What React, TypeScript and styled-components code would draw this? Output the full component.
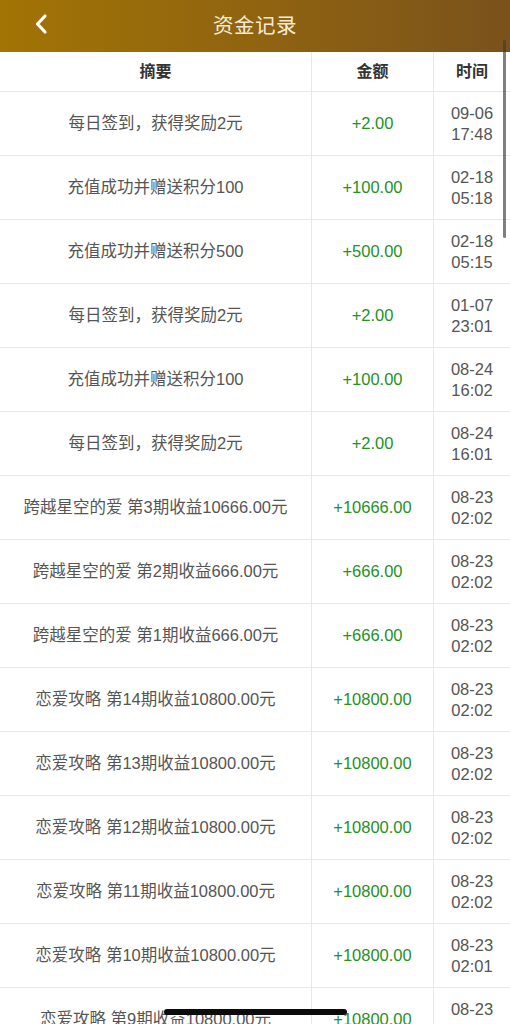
import { createGlobalStyle, styled } from 'styled-components'

const GlobalStyle = createGlobalStyle`
  html, body {
    margin: 0;
    padding: 0;
    background: #fff;
    overflow: hidden;
  }
  body {
    font-family: "Liberation Sans", "Noto Sans CJK SC", sans-serif;
  }
`

const Page = styled.div`
  width: 510px;
  height: 1024px;
  position: relative;
  overflow: hidden;
  background: #fff;
`

const NavBar = styled.div`
  height: 52px;
  box-sizing: border-box;
  padding-bottom: 5px;
  display: flex;
  align-items: center;
  justify-content: center;
  position: relative;
  background: linear-gradient(to right, #a27405, #8e6211 55%, #7a521b);
`

const BackBtn = styled.button`
  position: absolute;
  left: 27px;
  top: 9px;
  width: 28px;
  height: 30px;
  padding: 0;
  border: none;
  background: none;
  display: flex;
  align-items: center;
  justify-content: center;
`

const Title = styled.h1`
  margin: 0;
  font-size: 20.5px;
  font-weight: 400;
  color: #f6ecd6;
  letter-spacing: 0.5px;
`

const Grid = styled.div`
  display: grid;
  grid-template-columns: 312px 122px 1fr;
`

const Cell = styled.div<{ $head?: boolean; $green?: boolean; $last?: boolean }>`
  height: ${({ $head }) => ($head ? '39px' : '63px')};
  display: flex;
  align-items: center;
  justify-content: center;
  text-align: center;
  border-bottom: 1px solid #e8e8e8;
  border-right: ${({ $last }) => ($last ? 'none' : '1px solid #e8e8e8')};
  font-size: ${({ $head }) => ($head ? '16px' : '16.5px')};
  line-height: 21px;
  font-weight: ${({ $head }) => ($head ? 700 : 400)};
  color: ${({ $head, $green }) => ($head ? '#333' : $green ? '#23921f' : '#555')};
  white-space: pre-line;
`

const ScrollBar = styled.div`
  position: absolute;
  right: 4px;
  top: 40px;
  width: 3px;
  height: 198px;
  border-radius: 2px;
  background: rgba(60, 60, 60, 0.65);
`

const HomeIndicator = styled.div`
  position: absolute;
  left: 164px;
  bottom: 9px;
  width: 183px;
  height: 6px;
  border-radius: 3px;
  background: #0c0c0c;
`

const rows: [string, string, string][] = [
  ['每日签到，获得奖励2元', '+2.00', '09-06\n17:48'],
  ['充值成功并赠送积分100', '+100.00', '02-18\n05:18'],
  ['充值成功并赠送积分500', '+500.00', '02-18\n05:15'],
  ['每日签到，获得奖励2元', '+2.00', '01-07\n23:01'],
  ['充值成功并赠送积分100', '+100.00', '08-24\n16:02'],
  ['每日签到，获得奖励2元', '+2.00', '08-24\n16:01'],
  ['跨越星空的爱 第3期收益10666.00元', '+10666.00', '08-23\n02:02'],
  ['跨越星空的爱 第2期收益666.00元', '+666.00', '08-23\n02:02'],
  ['跨越星空的爱 第1期收益666.00元', '+666.00', '08-23\n02:02'],
  ['恋爱攻略 第14期收益10800.00元', '+10800.00', '08-23\n02:02'],
  ['恋爱攻略 第13期收益10800.00元', '+10800.00', '08-23\n02:02'],
  ['恋爱攻略 第12期收益10800.00元', '+10800.00', '08-23\n02:02'],
  ['恋爱攻略 第11期收益10800.00元', '+10800.00', '08-23\n02:02'],
  ['恋爱攻略 第10期收益10800.00元', '+10800.00', '08-23\n02:01'],
  ['恋爱攻略 第9期收益10800.00元', '+10800.00', '08-23\n02:01'],
]

export default function App() {
  return (
    <Page>
      <GlobalStyle />
      <NavBar>
        <BackBtn aria-label="back">
          <svg width="14" height="22" viewBox="0 0 14 22">
            <path
              d="M11 3 L3.5 11 L11 19"
              fill="none"
              stroke="#fff"
              strokeWidth="3.2"
              strokeLinecap="round"
              strokeLinejoin="round"
            />
          </svg>
        </BackBtn>
        <Title>资金记录</Title>
      </NavBar>
      <Grid>
        <Cell $head>摘要</Cell>
        <Cell $head>金额</Cell>
        <Cell $head $last>时间</Cell>
        {rows.map(([desc, amount, time], i) => (
          <>
            <Cell key={`d${i}`}>{desc}</Cell>
            <Cell key={`a${i}`} $green>{amount}</Cell>
            <Cell key={`t${i}`} $last>{time}</Cell>
          </>
        ))}
      </Grid>
      <ScrollBar />
      <HomeIndicator />
    </Page>
  )
}
